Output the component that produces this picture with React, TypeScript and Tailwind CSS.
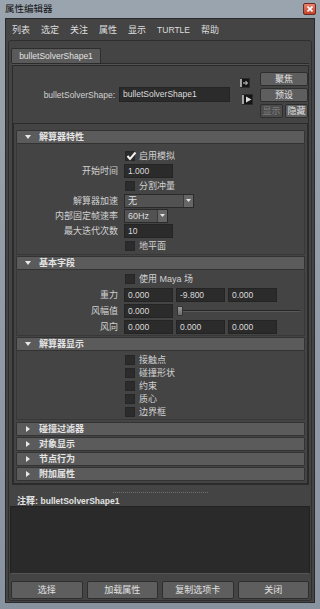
import React from "react";

const field =
  "h-[14px] bg-[#2b2b2b] border border-[#242424] text-[8.5px] text-[#dcdcdc] leading-[12px] px-[3px] shrink-0";

function Check({ checked = false }: { checked?: boolean }) {
  return (
    <span className="relative w-[10px] h-[10px] bg-[#2c2c2c] border border-[#262626] shrink-0">
      {checked && (
        <svg className="absolute left-[0px] top-[-1px]" width="11" height="10" viewBox="0 0 11 10">
          <path d="M1.5 5 L4 8 L9.5 1.5" fill="none" stroke="#f2f2f2" strokeWidth="2" />
        </svg>
      )}
    </span>
  );
}

function CheckRow({ label, checked = false, h = "h-[15px]" }: { label: string; checked?: boolean; h?: string }) {
  return (
    <div className={`flex items-center ${h} pl-[108px] gap-[4px]`}>
      <Check checked={checked} />
      <span className="text-[9px] leading-[10px] text-[#d2d2d2]">{label}</span>
    </div>
  );
}

function Row({ label, children, h = "h-[15px]" }: { label: string; children: React.ReactNode; h?: string }) {
  return (
    <div className={`flex items-center ${h}`}>
      <div className="w-[101px] text-right text-[9px] leading-[10px] text-[#d2d2d2] whitespace-nowrap">{label}</div>
      <div className="flex items-center ml-[6px] gap-[3px] flex-1">{children}</div>
    </div>
  );
}

function Drop({ value, className }: { value: string; className: string }) {
  return (
    <div className={`h-[14px] flex border border-[#2a2a2a] bg-[#525252] ${className}`}>
      <div className="flex-1 text-[9px] leading-[12px] text-[#dddddd] px-[3px]">{value}</div>
      <div className="w-[10px] border-l border-[#3a3a3a] bg-[#666] flex items-center justify-center">
        <svg width="5" height="3" viewBox="0 0 5 3">
          <path d="M0 0 H5 L2.5 3 Z" fill="#e6e6e6" />
        </svg>
      </div>
    </div>
  );
}

function Header({ label, open = false }: { label: string; open?: boolean }) {
  return (
    <div className="h-[14px] flex items-center bg-[#5b5b5b] border border-[#333] rounded-[1px]">
      <div className="w-[21px] flex justify-center">
        {open ? (
          <svg width="6" height="4" viewBox="0 0 6 4">
            <path d="M0 0 H6 L3 4 Z" fill="#e8e8e8" />
          </svg>
        ) : (
          <svg width="4" height="6" viewBox="0 0 4 6">
            <path d="M0 0 L4 3 L0 6 Z" fill="#e8e8e8" />
          </svg>
        )}
      </div>
      <span className="ml-[1px] text-[9px] leading-[10px] font-bold text-[#e4e4e4]">{label}</span>
    </div>
  );
}

function Btn({ label, className = "", disabled = false }: { label: string; className?: string; disabled?: boolean }) {
  return (
    <div
      className={`flex items-center justify-center border border-[#2e2e2e] rounded-[2px] text-[9px] leading-[10px] ${
        disabled ? "bg-[#4c4c4c] text-[#7c7c7c]" : "bg-[#5e5e5e] text-[#e0e0e0]"
      } ${className}`}
    >
      {label}
    </div>
  );
}

export default function App() {
  const menus = ["列表", "选定", "关注", "属性", "显示", "TURTLE", "帮助"];

  return (
    <div className="w-[320px] h-[609px] overflow-hidden flex flex-col bg-gradient-to-b from-[#9aa4ae] to-[#8893a0] font-['Liberation_Sans','Noto_Sans_CJK_SC',sans-serif]">
      {/* title bar */}
      <div className="h-[18px] flex items-center pl-[5px] pr-[4px] shrink-0">
        <span className="text-[9.5px] leading-[10px] text-[#111]">属性编辑器</span>
        <div className="ml-auto w-[13px] h-[12px] rounded-[2px] border border-[#6b2a20] bg-gradient-to-b from-[#e8826c] to-[#c2412a] flex items-center justify-center">
          <svg width="6" height="6" viewBox="0 0 6 6">
            <path d="M0.5 0.5 L5.5 5.5 M5.5 0.5 L0.5 5.5" stroke="#fff" strokeWidth="1.6" />
          </svg>
        </div>
      </div>

      {/* window body */}
      <div className="mx-[5px] h-[585px] bg-[#444] border border-[#2a2a2a] flex flex-col shrink-0">
        {/* menu bar */}
        <div className="h-[21px] flex items-center pl-[6px] gap-[11px] shrink-0">
          {menus.map((m) => (
            <span key={m} className={`${m === "TURTLE" ? "text-[8.5px]" : "text-[9px]"} leading-[10px] text-[#dedede]`}>
              {m}
            </span>
          ))}
        </div>

        {/* main panel */}
        <div className="mx-[2px] h-[561px] border border-[#2e2e2e] rounded-[3px] flex flex-col shrink-0">
          {/* tab */}
          <div className="mt-[7px] ml-[2px] w-[90px] h-[15px] bg-[#5a5a5a] border border-b-0 border-[#2d2d2d] rounded-t-[2px] flex items-center justify-center">
            <span className="text-[8.5px] leading-[10px] text-[#e0e0e0]">bulletSolverShape1</span>
          </div>
          <div className="ml-[3px] mr-[2px] h-[3px] bg-[#525252] border-y border-[#2b2b2b] shrink-0" />

          {/* tab pane */}
          <div className="ml-[3px] mr-[2px] border-x border-b border-[#2b2b2b] flex flex-col">
            {/* node row */}
            <div className="h-[57px] flex shrink-0">
              <div className="flex items-center">
                <div className="w-[102px] text-right text-[8.5px] leading-[10px] text-[#d2d2d2]">bulletSolverShape:</div>
                <div className={`${field} ml-[4px] w-[111px] h-[15px] leading-[13px]`}>bulletSolverShape1</div>
                <div className="ml-[9px] w-[14px] flex flex-col gap-[6px] mt-[-6px]">
                  <svg width="12" height="10" viewBox="0 0 12 10">
                    <rect x="1.5" y="0.5" width="9" height="9" fill="#141414" stroke="#2a2a2a" />
                    <path d="M2 1 V9" stroke="#dcdcdc" strokeWidth="1.4" />
                    <path d="M4 5 H8 M6.5 3 L8.5 5 L6.5 7" fill="none" stroke="#dcdcdc" strokeWidth="1" />
                  </svg>
                  <svg width="13" height="11" viewBox="0 0 13 11" className="ml-[3px]">
                    <rect x="0.5" y="0.5" width="10" height="10" fill="#141414" stroke="#2a2a2a" />
                    <path d="M1 1 V10" stroke="#dcdcdc" strokeWidth="1.4" />
                    <path d="M4 2.5 L9.5 5.5 L4 8.5 Z" fill="#dcdcdc" />
                  </svg>
                </div>
              </div>
              <div className="ml-[7px] w-[50px] pt-[6px] flex flex-col gap-[2px]">
                <Btn label="聚焦" className="h-[14px]" />
                <Btn label="预设" className="h-[14px]" />
                <div className="flex gap-[2px]">
                  <Btn label="显示" disabled className="h-[14px] w-[23px]" />
                  <Btn label="隐藏" className="h-[14px] flex-1" />
                </div>
              </div>
            </div>

            {/* attribute scroll frame */}
            <div className="h-[361px] border border-[#2b2b2b] px-[2px] pt-[6px] flex flex-col shrink-0">
              {/* 解算器特性 */}
              <Header label="解算器特性" open />
              <div className="h-[111px] border-x border-b border-[#383838] pt-[4px]">
                <CheckRow label="启用模拟" checked />
                <Row label="开始时间">
                  <div className={`${field} w-[49px]`}>1.000</div>
                </Row>
                <CheckRow label="分割冲量" />
                <Row label="解算器加速">
                  <Drop value="无" className="w-[70px]" />
                </Row>
                <Row label="内部固定帧速率">
                  <Drop value="60Hz" className="w-[44px]" />
                </Row>
                <Row label="最大迭代次数">
                  <div className={`${field} w-[49px]`}>10</div>
                </Row>
                <CheckRow label="地平面" />
              </div>

              {/* 基本字段 */}
              <div className="mt-[1px]">
                <Header label="基本字段" open />
              </div>
              <div className="h-[66px] border-x border-b border-[#383838] pt-[1px]">
                <CheckRow label="使用 Maya 场" h="h-[16px]" />
                <Row label="重力" h="h-[16px]">
                  <div className={`${field} w-[49px]`}>0.000</div>
                  <div className={`${field} w-[49px]`}>-9.800</div>
                  <div className={`${field} w-[49px]`}>0.000</div>
                </Row>
                <Row label="风幅值" h="h-[16px]">
                  <div className={`${field} w-[49px]`}>0.000</div>
                  <div className="relative ml-[1px] w-[123px] h-[12px] flex items-center">
                    <div className="w-full h-[2px] border-t border-[#262626] border-b border-b-[#5a5a5a]" />
                    <div className="absolute left-0 top-[1px] w-[6px] h-[10px] rounded-[1px] bg-gradient-to-b from-[#9a9a9a] to-[#6c6c6c] border border-[#333]" />
                  </div>
                </Row>
                <Row label="风向" h="h-[16px]">
                  <div className={`${field} w-[49px]`}>0.000</div>
                  <div className={`${field} w-[49px]`}>0.000</div>
                  <div className={`${field} w-[49px]`}>0.000</div>
                </Row>
              </div>

              {/* 解算器显示 */}
              <div className="mt-[1px]">
                <Header label="解算器显示" open />
              </div>
              <div className="h-[69px] border-x border-b border-[#383838] pt-[2px]">
                <CheckRow label="接触点" h="h-[13px]" />
                <CheckRow label="碰撞形状" h="h-[13px]" />
                <CheckRow label="约束" h="h-[13px]" />
                <CheckRow label="质心" h="h-[13px]" />
                <CheckRow label="边界框" h="h-[13px]" />
              </div>

              <div className="mt-[2px] flex flex-col gap-[1px]">
                <Header label="碰撞过滤器" />
                <Header label="对象显示" />
                <Header label="节点行为" />
                <Header label="附加属性" />
              </div>
            </div>
          </div>

          {/* notes */}
          <div className="h-[11px] flex justify-center pt-[7px] shrink-0">
            <div className="w-[95px] border-t border-dotted border-[#6e6e6e]" />
          </div>
          <div className="h-[10px] pl-[8px] flex items-center shrink-0">
            <span className="text-[9px] leading-[10px] font-bold text-[#e2e2e2]">
              注释: <span className="text-[8.5px]">bulletSolverShape1</span>
            </span>
          </div>
          <div className="mx-[1px] h-[68px] bg-[#2a2a2a] border border-[#222] border-b-[#555] shrink-0" />

          {/* bottom buttons */}
          <div className="mt-[7px] mx-[2px] grid grid-cols-4 gap-[4px]">
            <Btn label="选择" className="h-[18px]" />
            <Btn label="加载属性" className="h-[18px]" />
            <Btn label="复制选项卡" className="h-[18px]" />
            <Btn label="关闭" className="h-[18px]" />
          </div>
        </div>
      </div>
    </div>
  );
}
